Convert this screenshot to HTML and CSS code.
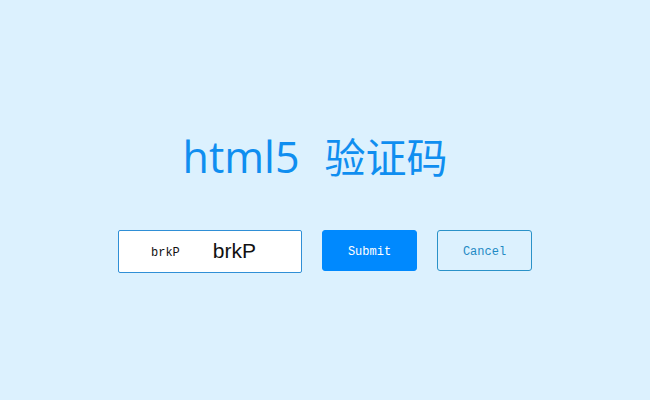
FILE: index.html
```html
<!DOCTYPE html>
<html>
<head>
<meta charset="utf-8">
<link rel="stylesheet" href="styles.css">
</head>
<body>
<div class="page">
  <h1 class="title"><span class="title-en">html5</span><span class="title-cn">验证码</span></h1>
  <div class="row">
    <div class="captcha">
      <span class="code-input">brkP</span>
      <span class="code-img">brkP</span>
    </div>
    <button class="btn btn-submit">Submit</button>
    <button class="btn btn-cancel">Cancel</button>
  </div>
</div>
</body>
</html>
```

FILE: styles.css
```css
html, body {
  margin: 0;
  padding: 0;
  background: #dcf1fe;
}
.page {
  width: 650px;
  height: 400px;
  display: flex;
  flex-direction: column;
  align-items: center;
  padding-top: 130px;
  box-sizing: border-box;
}
.title {
  margin: 0 20px 0 0;
  height: 50px;
  font-weight: 400;
  color: #0f8ef0;
  display: flex;
  align-items: baseline;
  line-height: 50px;
}
.title-en {
  font-family: "Open Sans", sans-serif;
  font-size: 43px;
}
.title-cn {
  font-family: "Noto Sans CJK SC", sans-serif;
  font-size: 41px;
  margin-left: 25px;
}
.row {
  display: flex;
  align-items: flex-start;
  gap: 20px;
  margin-top: 50px;
}
.captcha {
  width: 184px;
  height: 43px;
  box-sizing: border-box;
  background: #fff;
  border: 1px solid #2f8fd6;
  border-radius: 2px;
  display: flex;
  align-items: center;
  padding-left: 32px;
}
.code-input {
  font-family: "Liberation Mono", monospace;
  font-size: 12px;
  color: #111;
  margin-top: 3px;
}
.code-img {
  font-family: "Liberation Sans", sans-serif;
  font-size: 21px;
  color: #111;
  margin-left: 33px;
  margin-bottom: 2px;
}
.btn {
  width: 95px;
  height: 41px;
  box-sizing: border-box;
  border-radius: 3px;
  font-family: "Liberation Mono", monospace;
  font-size: 12px;
  padding: 3px 0 0 0;
  cursor: pointer;
}
.btn-submit {
  background: #0089fe;
  border: 1px solid #0089fe;
  color: #fff;
}
.btn-cancel {
  background: transparent;
  border: 1px solid #2a92c8;
  color: #1f8ac4;
}
```
